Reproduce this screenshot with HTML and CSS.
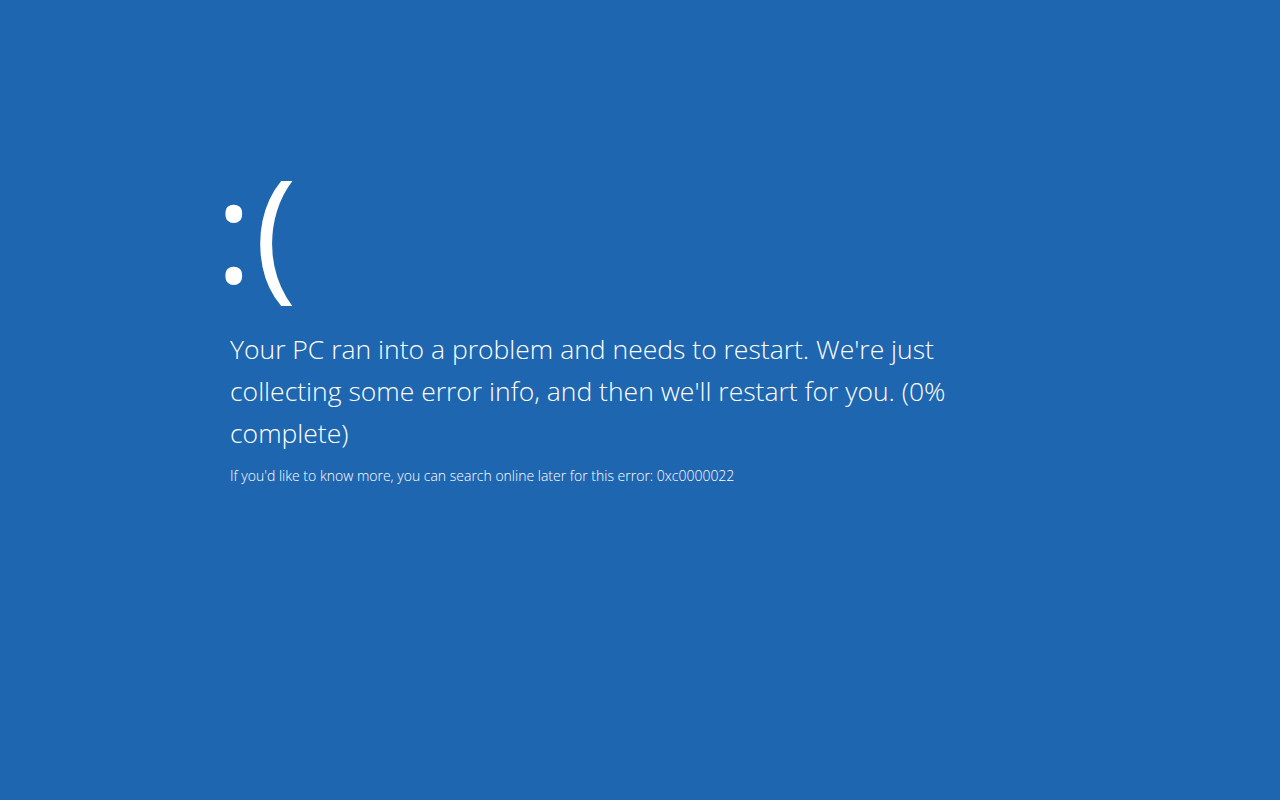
FILE: index.html
```html
<!DOCTYPE html>
<html lang="en">
<head>
    <meta charset="UTF-8">
    <meta name="viewport" content="width=device-width, initial-scale=1.0">
    <title>Your PC ran into a problem</title>
    <link rel="stylesheet" href="styles.css">
</head>
<body>
    <div class="screen">
        <div class="face">:(</div>
        <p class="message">Your PC ran into a problem and needs to restart. We're just collecting some error info, and then we'll restart for you. (0% complete)</p>
        <p class="details">If you'd like to know more, you can search online later for this error: 0xc0000022</p>
    </div>
</body>
</html>
```

FILE: styles.css
```css
html, body {
    margin: 0;
    padding: 0;
    height: 100%;
}
body {
    background-color: #1f66b1;
    color: #fff;
    font-family: 'Open Sans', 'Noto Sans', sans-serif;
    font-weight: 300;
    overflow: hidden;
}
.screen {
    padding: 143px 0 0 230px;
}
.face {
    margin-left: -15px;
    font-size: 143px;
    line-height: 170px;
    font-weight: 400;
    letter-spacing: 2px;
}
.message {
    margin: 15px 0 0 0;
    max-width: 740px;
    font-size: 26.5px;
    line-height: 42px;
}
.details {
    margin: 12px 0 0 0;
    font-size: 14px;
    line-height: 20px;
}
```
